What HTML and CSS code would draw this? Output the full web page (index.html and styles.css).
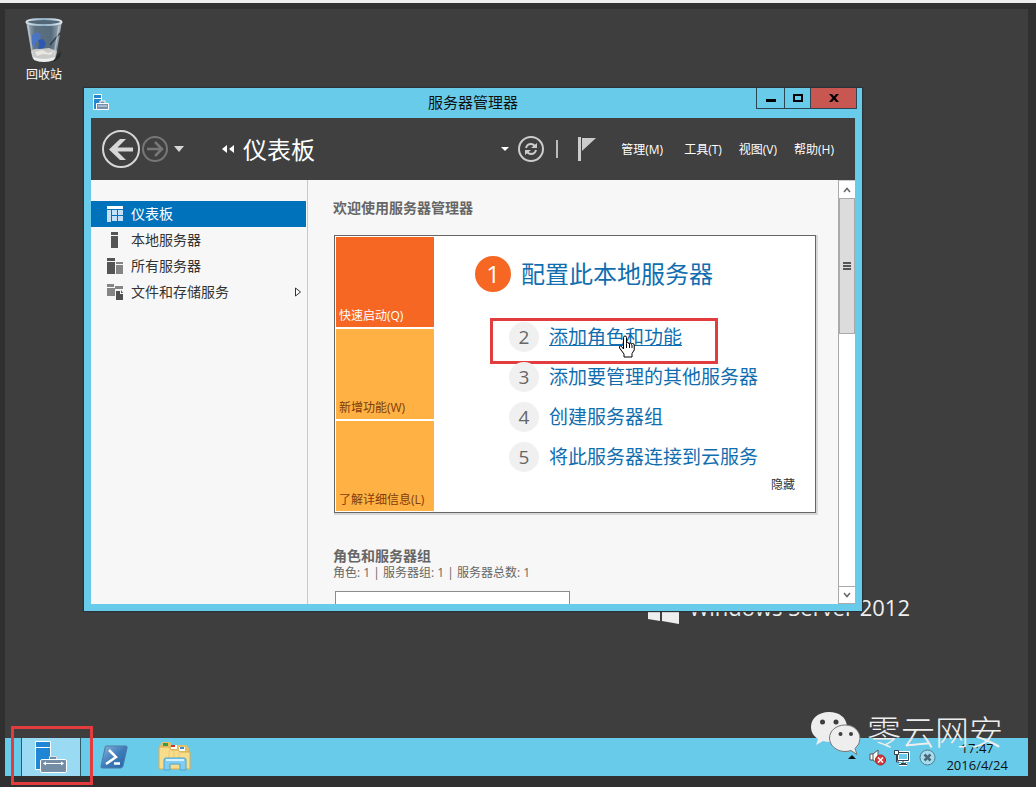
FILE: index.html
```html
<!DOCTYPE html>
<html lang="zh-CN">
<head>
<meta charset="utf-8">
<title>服务器管理器</title>
<link rel="stylesheet" href="styles.css">
</head>
<body>
<div class="screen">
  <main class="desktop">
    <a class="shortcut" href="#">
      <svg width="40" height="46" viewBox="0 0 40 46" aria-hidden="true">
        <defs>
          <linearGradient id="bin" x1="0" x2="1" y1="0" y2="0"><stop offset="0" stop-color="#a9b6bf"/><stop offset=".25" stop-color="#5e7180"/><stop offset=".7" stop-color="#566b7c"/><stop offset="1" stop-color="#aeb9c1"/></linearGradient>
          <linearGradient id="rim" x1="0" x2="1"><stop offset="0" stop-color="#d7e1e8"/><stop offset=".5" stop-color="#8fb0c6"/><stop offset="1" stop-color="#e3e9ed"/></linearGradient>
        </defs>
        <path d="M29 43l8-9-1 6-6 5z" fill="#292929"/>
        <path d="M2 4h36l-6 36q-1 5-12 5t-12-5z" fill="url(#bin)"/>
        <path d="M7 34q4-3 9-2l9-1 8 3-2 7q-1 3-11 3T9 41z" fill="#c9cac8"/>
        <path d="M11 35l7-2 6 3 6-2-3 4-8-1-6 2z" fill="#e8e7e2"/>
        <path d="M9 40q11 4 22 0l-1 3q-10 4-20 0z" fill="#eef0f0"/>
        <path d="M8 18l5-3 4 3-2 6-4 1v6l-3-4z" fill="#4a74c4"/>
        <path d="M14 23l5-1 3 4-2 5-6 1 1-5z" fill="#2d58b4"/>
        <path d="M36 16L26 28" stroke="#33424e" stroke-width="1.5"/>
        <path d="M4 8l5 32M35 9l-5 30" stroke="#d5dde2" stroke-width="1.5" opacity=".6"/>
        <ellipse cx="20" cy="5" rx="17.500" ry="3" fill="#526778" stroke="url(#rim)" stroke-width="2"/>
      </svg>
      <span>回收站</span>
    </a>

    <div class="brand">
      <svg width="36" height="38" viewBox="0 0 36 38" aria-hidden="true"><path d="M1 6l12-2v14H1zM15 4l17-3v17H15zM1 20h12v13L1 31zM15 20h17v16l-17-3z" fill="#eee"/></svg>
      <span>Windows Server 2012</span>
    </div>

    <section class="window">
      <header class="titlebar">
        <svg class="app-icon" width="16" height="16" viewBox="0 0 16 16" aria-hidden="true"><path d="M.5.500h8v15h-8z" fill="#2687cf" stroke="#fff"/><path d="M1 4.500h8" stroke="#fff"/><path d="M3.500 9.500h12v6h-12zM7 9V7h5v2" fill="#7590a8" stroke="#fff"/><path d="M5 12h9" stroke="#dce9f2"/></svg>
        <h1>服务器管理器</h1>
        <div class="controls">
          <button class="minimize" aria-label="最小化"><svg width="10" height="10" viewBox="0 0 10 10"><path d="M0 6h10v3H0z"/></svg></button>
          <button class="maximize" aria-label="最大化"><svg width="10" height="10" viewBox="0 0 10 10"><path d="M1 2h8v6H1z" fill="none" stroke="#000" stroke-width="2"/></svg></button>
          <button class="close" aria-label="关闭"><svg width="10" height="10" viewBox="0 0 10 10"><path d="M0 1h3l2 2.500L7 1h3L6.500 5 10 9H7L5 6.500 3 9H0l3.500-4z"/></svg></button>
        </div>
      </header>

      <div class="toolbar">
        <button class="icon-button" aria-label="后退"><svg width="38" height="38" viewBox="0 0 38 38"><circle cx="19" cy="19" r="18" fill="none" stroke="#d6d6d6" stroke-width="2"/><path d="M7 19.500L18 9h6l-8.500 8.500H31v4H15.500L24 30h-6z" fill="#d6d6d6"/></svg></button>
        <button class="icon-button forward" aria-label="前进"><svg width="26" height="26" viewBox="0 0 26 26"><g fill="none" stroke="#777" stroke-width="2"><circle cx="13" cy="13" r="12"/><path d="M5 13h15M13 6l7 7-7 7" stroke-width="2.500"/></g></svg></button>
        <button class="icon-button history" aria-label="历史记录"><svg width="12" height="8" viewBox="0 0 12 8"><path d="M1 1h10L6 7z" fill="#d6d6d6"/></svg></button>
        <svg class="crumb" width="14" height="10" viewBox="0 0 14 10" aria-hidden="true"><path d="M6 1v8L1 5zM13 1v8L8 5z" fill="#fff"/></svg>
        <h2>仪表板</h2>
        <button class="icon-button crumb-menu" aria-label="展开"><svg width="8" height="6" viewBox="0 0 8 6"><path d="M0 1h8L4 5z" fill="#fff"/></svg></button>
        <button class="icon-button refresh" aria-label="刷新"><svg width="26" height="26" viewBox="0 0 26 26"><g fill="none" stroke="#ccc" stroke-width="2"><circle cx="13" cy="13" r="12"/><path d="M8 12q1-4 5-4 2 0 4 2M18 14q-1 4-5 4-2 0-4-2"/></g><path d="M19 7v5h-6zM7 19v-5h6z" fill="#ccc"/></svg></button>
        <span class="divider"></span>
        <button class="icon-button flag" aria-label="通知"><svg width="18" height="24" viewBox="0 0 18 24"><path d="M0 0h3v24H0zM4 1h14L4 14z" fill="#ccc"/></svg></button>
        <nav class="menu">
          <button class="first">管理(M)</button><button>工具(T)</button><button>视图(V)</button><button>帮助(H)</button>
        </nav>
      </div>

      <div class="workspace">
        <nav class="sidebar">
          <a class="selected" href="#"><svg width="16" height="16" viewBox="0 0 16 16" aria-hidden="true"><path d="M0 4h4v12H0zM5 4h5v5H5zM11 4h5v5h-5zM5 10h5v5H5zM11 10h5v5h-5z" fill="#c3e2f7"/><path d="M0 0h16v3H0z" fill="#fff"/></svg>仪表板</a>
          <a href="#"><svg width="16" height="16" viewBox="0 0 16 16" aria-hidden="true"><path d="M4 0h7v3H4zM4 4h7v12H4z" fill="#555"/></svg>本地服务器</a>
          <a href="#"><svg width="16" height="16" viewBox="0 0 16 16" aria-hidden="true"><path d="M0 0h8v3H0zM0 4h8v12H0z" fill="#555"/><path d="M9 4h7v2H9zM9 7h7v9H9z" fill="#858585"/></svg>所有服务器</a>
          <a href="#"><svg width="16" height="16" viewBox="0 0 16 16" aria-hidden="true"><path d="M0 0h7v3H0zM0 4h8v8H0zM8 2h8v3H8z" fill="#858585"/><path d="M9 7h4v3h3v6H9z" fill="#505050"/><path d="M14 6l2 3h-2z" fill="#505050"/></svg>文件和存储服务<svg class="expand" width="8" height="10" viewBox="0 0 8 10" aria-hidden="true"><path d="M1.500 1v8l5-4z" fill="#fff" stroke="#333"/></svg></a>
        </nav>

        <div class="content">
          <h3>欢迎使用服务器管理器</h3>
          <div class="welcome">
            <div class="tiles">
              <button class="tile active">快速启动(Q)</button>
              <button class="tile">新增功能(W)</button>
              <button class="tile">了解详细信息(L)</button>
            </div>
            <div class="steps">
              <a class="primary" href="#"><span class="number">1</span>配置此本地服务器</a>
              <ul>
                <li><span class="number">2</span><a class="hovered" href="#">添加角色和功能</a>
                  <span class="highlight"></span>
                  <svg class="cursor" width="18" height="24" viewBox="0 0 18 24" aria-hidden="true"><path d="M5.500 14V2.500q0-1.500 1.500-1.500t1.500 1.500v6q0-1 1.250-1t1.250 1.500q0-1 1.250-1t1.250 1.500q0-1 1.250-1t1.500 1.500v5L14 18.500V22H6v-3l-4.500-6q-.5-2 1-2 1 0 3 3z" fill="#fff" stroke="#000"/><path d="M8.500 9v4M11.500 9v4M14 10v3" stroke="#000"/></svg>
                </li>
                <li><span class="number">3</span><a href="#">添加要管理的其他服务器</a></li>
                <li><span class="number">4</span><a href="#">创建服务器组</a></li>
                <li><span class="number">5</span><a href="#">将此服务器连接到云服务</a></li>
              </ul>
              <button class="hide">隐藏</button>
            </div>
          </div>
          <h3 class="groups">角色和服务器组</h3>
          <p>角色: 1 | 服务器组: 1 | 服务器总数: 1</p>
          <div class="group-card"></div>
        </div>

        <div class="scrollbar">
          <button aria-label="向上滚动"><svg width="8" height="6" viewBox="0 0 8 6"><path d="M1 5l3-3.500L7 5" fill="none" stroke="#666" stroke-width="1.500"/></svg></button>
          <div class="track"><div class="thumb"><svg width="8" height="8" viewBox="0 0 8 8"><path d="M0 1h8M0 4h8M0 7h8" stroke="#555" stroke-width="2"/></svg></div></div>
          <button class="down" aria-label="向下滚动"><svg width="8" height="6" viewBox="0 0 8 6"><path d="M1 1l3 3.500L7 1" fill="none" stroke="#666" stroke-width="1.500"/></svg></button>
        </div>
      </div>
    </section>
  </main>

  <footer class="taskbar">
    <button class="task running" aria-label="服务器管理器"><svg width="32" height="32" viewBox="0 0 32 32"><path d="M.5.500h15v28H.5z" fill="#1e86d4" stroke="#fff"/><path d="M1 6.500h14" stroke="#fff"/><path d="M14.500 18v-2.500h7V18" fill="#738da4" stroke="#d7e2ea"/><rect x="5.500" y="18.500" width="26" height="13" rx="1.500" fill="#738da4" stroke="#fff"/><path d="M9 22.500h19" stroke="#fff"/><path d="M11 20.500l-3 2 3 2zM26 20.500l3 2-3 2z" fill="#fff"/></svg><span class="highlight"></span></button>
    <button class="task shell" aria-label="PowerShell"><svg width="28" height="24" viewBox="0 0 28 24"><defs><linearGradient id="ps" x2="1" y2="1"><stop stop-color="#8db8dd"/><stop offset=".5" stop-color="#3f7dba"/><stop offset="1" stop-color="#2562a2"/></linearGradient></defs><path d="M6 1h20q1.500 0 1 2l-4 18q-.5 2-2.500 2H2q-1.500 0-1-2L5 3q.3-2 1-2z" fill="url(#ps)" stroke="#4c7ba8"/><path d="M9 5l7 7-10 7" fill="none" stroke="#fff" stroke-width="2.500"/><path d="M14 18.500h6" stroke="#fff" stroke-width="2.500"/></svg></button>
    <button class="task explorer" aria-label="文件资源管理器"><svg width="34" height="32" viewBox="0 0 34 32"><path d="M2 5l2-4h8l2 3h14l3 3v20H2z" fill="#e3bf66"/><path d="M5 2h5v3H5z" fill="#3d9a44"/><path d="M13 4h6v4h-6z" fill="#fff"/><path d="M13 4h4v2h-4z" fill="#c43a22"/><path d="M21 6h6v4h-6z" fill="#fff"/><path d="M22 6h4v2h-4z" fill="#3b8ed0"/><path d="M1 6h10l2 3h7l2 2h10v17H1z" fill="#f6dc8b" stroke="#d7ae56"/><path d="M11 9v17M16 10v14M21 11v14" stroke="#eaca70"/><path d="M6 19q0-2 2-2h18q2 0 2 2v10h-6v-6H12v6H6z" fill="#80cdf0" stroke="#4aa5d4"/><path d="M8 19h18" stroke="#d5f2ff" stroke-width="2"/></svg></button>

    <div class="tray">
      <button class="more" aria-label="显示隐藏的图标"><svg width="8" height="4" viewBox="0 0 8 4"><path d="M4 0l4 4H0z" fill="#111"/></svg></button>
      <button aria-label="音量"><svg width="17" height="17" viewBox="0 0 17 17"><path d="M1 5h3l5-4v14l-5-4H1z" fill="#fff" stroke="#555"/><path d="M4 5v6" stroke="#555"/><circle cx="11.500" cy="11" r="5" fill="#d83a3c" stroke="#a72025"/><path d="M9 8.500l5 5m0-5l-5 5" stroke="#fff" stroke-width="1.500"/></svg></button>
      <button class="network" aria-label="网络"><svg width="17" height="17" viewBox="0 0 17 17"><path d="M4.500 3.500h11v8h-11z" fill="#68cbe9" stroke="#fff" stroke-width="3"/><path d="M10 12v3M6 15.500h8" stroke="#fff" stroke-width="3"/><path d="M4.500 3.500h11v8h-11zM8 14.500h5M6 15.500h8M10 12v3" fill="none" stroke="#30424e"/><path d="M1.500 1.500h4v4h-4z" fill="#fff" stroke="#30424e"/><path d="M3.500 6v7H6" fill="none" stroke="#30424e"/></svg></button>
      <button class="status" aria-label="状态"><svg width="17" height="17" viewBox="0 0 17 17"><circle cx="8.500" cy="8.500" r="7.500" fill="#a5dcf0" stroke="#557c8b"/><path d="M5.500 5.500l6 6m0-6l-6 6" stroke="#4a6874" stroke-width="2.500"/></svg></button>
      <time datetime="2016-04-24T17:47">17:47<br>2016/4/24</time>
    </div>
    <div class="watermark">
      <svg width="52" height="46" viewBox="0 0 52 46" aria-hidden="true"><path d="M19 1C8.500 1 1 7.500 1 16c0 5 2.500 9 7 12l-2 6 7-4q3 1 8 1l14-8 2-8C36 6 29 1 19 1z" fill="#eee"/><path d="M35 14c-9 0-15.500 6-15.500 13S26 40.500 35 40.500q3 0 6-1l6 4-2-6q5-4 5-10C50 20 44 14 35 14z" fill="#eee" stroke="#777"/><g fill="#3e3e3e"><circle cx="12.500" cy="11" r="2.500"/><circle cx="26" cy="11" r="2.500"/><circle cx="30.500" cy="23" r="2"/><circle cx="41" cy="23" r="2"/></g></svg>
      <span>零云网安</span>
    </div>
  </footer>
</div>
</body>
</html>
```

FILE: styles.css
```css
* { box-sizing: border-box; }

body {
  margin: 0;
  font-family: "Open Sans", "Noto Sans CJK SC", sans-serif;
  font-size: 12px;
  line-height: 16px;
  color: #333;
}

h1, h2, h3, p, ul { margin: 0; padding: 0; font-weight: 400; }
ul { list-style: none; }
a { color: inherit; text-decoration: none; }
svg { display: block; flex: none; }

button {
  margin: 0;
  padding: 0;
  border: 0;
  background: none;
  font: inherit;
  color: inherit;
}

.screen {
  display: flex;
  flex-direction: column;
  height: 100vh;
  border-top: 3px solid #ededed;
  background: #303030;
  padding: 6px 8px 11px 5px;
}

.desktop {
  position: relative;
  flex: 1;
  min-height: 0;
  background: #3e3e3e;
}

.shortcut {
  display: inline-flex;
  flex-direction: column;
  align-items: center;
  gap: 4px;
  padding: 8px 19px;
  color: #fff;
}

.brand {
  position: absolute;
  right: 118px;
  bottom: 112px;
  display: flex;
  align-items: center;
  gap: 6px;
  color: #eee;
  font-size: 22px;
  line-height: 38px;
}

/* Window */
.window {
  position: absolute;
  inset: 79px 166px 127px 79px;
  display: flex;
  flex-direction: column;
  padding: 0 7px 7px;
  background: #68cbe9;
  box-shadow: 0 0 1px 1px #28333a;
}

.titlebar {
  display: grid;
  grid-template-columns: 1fr auto 1fr;
  height: 30px;
  flex: none;
}

.app-icon { margin: 6px 2px; }

.titlebar h1 {
  font-size: 15px;
  line-height: 28px;
  color: #111;
}

.controls {
  display: flex;
  justify-self: end;
  height: 21px;
  margin-right: -2px;
  border: 1px solid #2b4552;
  border-top: 0;
}

.controls button {
  display: grid;
  place-items: center;
  width: 26px;
}
.controls .minimize { border-right: 1px solid #2b4552; width: 28px; }
.controls .maximize { width: 25px; }
.controls .close { width: 46px; background: #c75750; border-left: 1px solid #2b4552; }

.toolbar {
  display: flex;
  align-items: center;
  flex: none;
  height: 62px;
  padding: 0 21px 0 11px;
  background: #404040;
  color: #fff;
}

.forward { margin-left: 2px; }
.history { margin-left: 5px; }
.crumb { margin: 0 8px 0 36px; }
.toolbar h2 { padding-top: 2px; font-size: 24px; line-height: 32px; }
.crumb-menu { margin-left: auto; }
.refresh { margin-left: 9px; }
.divider { width: 2px; height: 18px; margin: 0 20px 0 12px; background: #bbb; }
.flag { margin-right: 25px; }
.menu { display: flex; gap: 17px; padding-top: 2px; }
.menu .first { margin-right: 4px; }

.workspace {
  display: flex;
  flex: 1;
  min-height: 0;
  background: #f7f7f7;
}

.sidebar {
  width: 217px;
  flex: none;
  padding: 21px 1px 0 0;
  border-right: 1px solid #c8c8c8;
}

.sidebar a {
  display: flex;
  align-items: center;
  gap: 8px;
  height: 26px;
  padding: 0 4px 0 16px;
  font-size: 14px;
}
.sidebar .selected { background: #0072bc; color: #fff; }
.expand { margin-left: auto; }

.content {
  flex: 1;
  min-width: 0;
  overflow: hidden;
  padding: 18px 22px 0 25px;
  color: #666;
}

.content h3 {
  font-size: 14px;
  line-height: 20px;
  font-weight: 700;
}

.welcome {
  display: flex;
  margin: 17px 0 34px 1px;
  padding: 1px;
  border: 1px solid #666;
  background: #fff;
  box-shadow: 1px 1px 0 1px #d8d8d8;
}

.tiles {
  display: flex;
  flex-direction: column;
  gap: 2px;
  width: 98px;
  flex: none;
}

.tile {
  display: flex;
  align-items: flex-end;
  height: 90px;
  padding: 3px;
  background: #ffb144;
  color: #7d3d0b;
  white-space: nowrap;
}
.tile.active { background: #f56722; color: #fff; }

.steps {
  display: flex;
  flex-direction: column;
  flex: 1;
  padding: 19px 19px 0 41px;
  color: #106eb0;
}

.primary {
  display: flex;
  align-items: center;
  gap: 10px;
  font-size: 24px;
  line-height: 36px;
}

.number {
  width: 30px;
  height: 30px;
  border-radius: 50%;
  background: #f0f0f0;
  color: #666;
  text-align: center;
  line-height: 30px;
}
.primary .number {
  width: 36px;
  height: 36px;
  line-height: 36px;
  background: #f56722;
  color: #fff;
}

.steps ul {
  display: flex;
  flex-direction: column;
  gap: 10px;
  margin: 30px 0 5px 34px;
}

.steps li {
  position: relative;
  display: flex;
  align-items: center;
  gap: 10px;
  font-size: 19px;
  line-height: 30px;
}

.hovered { text-decoration: underline; text-decoration-thickness: 1px; }
.hide { align-self: flex-end; color: #333; }

.highlight {
  position: absolute;
  border: 3px solid #e33c3f;
  pointer-events: none;
}
.steps .highlight { left: -19px; top: -4px; width: 228px; height: 46px; }
.cursor { position: absolute; left: 109px; top: 13px; }

.content .groups { line-height: 18px; }
.group-card {
  width: 235px;
  height: 80px;
  margin: 10px 0 0 2px;
  border: 1px solid #8c8c8c;
  background: #fff;
}

.scrollbar {
  display: flex;
  flex-direction: column;
  width: 17px;
  flex: none;
  border-left: 1px solid #aaa;
  background: #fff;
}

.scrollbar button {
  display: grid;
  place-items: center;
  height: 18px;
  border-top: 1px solid #ccc;
}
.scrollbar .down { border-top-color: #aaa; border-bottom: 1px solid #aaa; }
.track { flex: 1; min-height: 0; }

.thumb {
  display: grid;
  place-items: center;
  height: 35%;
  border: 1px solid #aaa;
  background: #dcdcdc;
}

/* Taskbar */
.taskbar {
  position: relative;
  display: flex;
  align-items: center;
  flex: none;
  height: 38px;
  padding-left: 16px;
  background: #68cbe9;
}

.task { display: grid; place-items: center; }

.running {
  position: relative;
  width: 60px;
  height: 38px;
  border: 1px solid #315a6c;
  border-width: 0 1px;
  background: #9bdaf3;
}
.running .highlight { left: -11px; top: -12px; width: 82px; height: 59px; }
.shell { margin-left: 19px; }
.explorer { margin-left: 30px; }

.tray {
  display: flex;
  align-items: center;
  margin-left: auto;
  padding-right: 20px;
}
.more { margin-right: 13px; }
.network { margin-left: 7px; }
.status { margin: 0 10px 0 9px; }

.tray time {
  text-align: center;
  font-size: 13px;
  line-height: 17px;
  color: #111;
}

.watermark {
  position: absolute;
  right: 25px;
  bottom: 19px;
  display: flex;
  align-items: center;
  gap: 5px;
  color: #eee;
  font-size: 34px;
  font-weight: 300;
  line-height: 42px;
}
.watermark span { padding-bottom: 4px; }
```
